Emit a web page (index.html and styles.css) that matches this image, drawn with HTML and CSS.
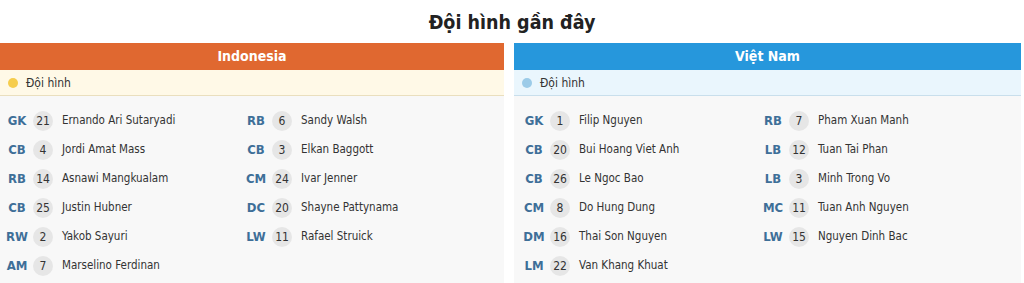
FILE: index.html
```html
<!DOCTYPE html>
<html lang="vi">
<head>
<meta charset="utf-8">
<link rel="stylesheet" href="styles.css">
</head>
<body>
<h1 class="title">Đội hình gần đây</h1>
<div class="teams">
  <section class="team team-home">
    <div class="team-head">Indonesia</div>
    <div class="team-sub"><span class="dot"></span>Đội hình</div>
    <div class="lineup">
      <div class="col">
        <div class="row"><span class="pos">GK</span><span class="num">21</span><span class="name">Ernando Ari Sutaryadi</span></div>
        <div class="row"><span class="pos">CB</span><span class="num">4</span><span class="name">Jordi Amat Mass</span></div>
        <div class="row"><span class="pos">RB</span><span class="num">14</span><span class="name">Asnawi Mangkualam</span></div>
        <div class="row"><span class="pos">CB</span><span class="num">25</span><span class="name">Justin Hubner</span></div>
        <div class="row"><span class="pos">RW</span><span class="num">2</span><span class="name">Yakob Sayuri</span></div>
        <div class="row"><span class="pos">AM</span><span class="num">7</span><span class="name">Marselino Ferdinan</span></div>
      </div>
      <div class="col">
        <div class="row"><span class="pos">RB</span><span class="num">6</span><span class="name">Sandy Walsh</span></div>
        <div class="row"><span class="pos">CB</span><span class="num">3</span><span class="name">Elkan Baggott</span></div>
        <div class="row"><span class="pos">CM</span><span class="num">24</span><span class="name">Ivar Jenner</span></div>
        <div class="row"><span class="pos">DC</span><span class="num">20</span><span class="name">Shayne Pattynama</span></div>
        <div class="row"><span class="pos">LW</span><span class="num">11</span><span class="name">Rafael Struick</span></div>
      </div>
    </div>
  </section>
  <section class="team team-away">
    <div class="team-head">Việt Nam</div>
    <div class="team-sub"><span class="dot"></span>Đội hình</div>
    <div class="lineup">
      <div class="col">
        <div class="row"><span class="pos">GK</span><span class="num">1</span><span class="name">Filip Nguyen</span></div>
        <div class="row"><span class="pos">CB</span><span class="num">20</span><span class="name">Bui Hoang Viet Anh</span></div>
        <div class="row"><span class="pos">CB</span><span class="num">26</span><span class="name">Le Ngoc Bao</span></div>
        <div class="row"><span class="pos">CM</span><span class="num">8</span><span class="name">Do Hung Dung</span></div>
        <div class="row"><span class="pos">DM</span><span class="num">16</span><span class="name">Thai Son Nguyen</span></div>
        <div class="row"><span class="pos">LM</span><span class="num">22</span><span class="name">Van Khang Khuat</span></div>
      </div>
      <div class="col">
        <div class="row"><span class="pos">RB</span><span class="num">7</span><span class="name">Pham Xuan Manh</span></div>
        <div class="row"><span class="pos">LB</span><span class="num">12</span><span class="name">Tuan Tai Phan</span></div>
        <div class="row"><span class="pos">LB</span><span class="num">3</span><span class="name">Minh Trong Vo</span></div>
        <div class="row"><span class="pos">MC</span><span class="num">11</span><span class="name">Tuan Anh Nguyen</span></div>
        <div class="row"><span class="pos">LW</span><span class="num">15</span><span class="name">Nguyen Dinh Bac</span></div>
      </div>
    </div>
  </section>
</div>
</body>
</html>
```

FILE: styles.css
```css
* { box-sizing: border-box; }
html, body { margin: 0; padding: 0; background: #fff; }
body {
  font-family: "DejaVu Sans Condensed", "DejaVu Sans", sans-serif;
  font-size: 12px;
  color: #333;
  overflow: hidden;
}
.title {
  margin: 0;
  height: 43px;
  padding-top: 10px;
  text-align: center;
  font-size: 19.5px;
  line-height: 26px;
  font-weight: bold;
  color: #222;
}
.teams {
  display: grid;
  grid-template-columns: 504px 507px;
  column-gap: 10px;
  padding-right: 3px;
}
.team-head {
  height: 27px;
  line-height: 27px;
  text-align: center;
  font-weight: bold;
  font-size: 14px;
  color: #fff;
}
.team-home .team-head { background: #e06830; }
.team-away .team-head { background: #2697dc; }
.team-sub {
  height: 26px;
  display: flex;
  align-items: center;
  padding-left: 8px;
  font-size: 12px;
  color: #333;
}
.team-home .team-sub { background: #fff9e7; border-bottom: 1px solid #eadfbe; }
.team-away .team-sub { background: #eaf6fd; border-bottom: 1px solid #c9dfec; }
.dot {
  width: 10px;
  height: 10px;
  border-radius: 50%;
  margin-right: 8px;
}
.team-home .dot { background: #f6cd4d; }
.team-away .dot { background: #9ccbe8; }
.lineup {
  background: #f8f8f8;
  display: grid;
  grid-template-columns: 239px 1fr;
  padding-top: 10px;
  height: 200px;
}
.team-away .lineup { padding-left: 3px; }
.row {
  height: 29px;
  display: flex;
  align-items: center;
}
.pos {
  width: 34px;
  text-align: center;
  font-weight: bold;
  font-size: 13px;
  color: #3e6f98;
}
.num {
  width: 20px;
  height: 20px;
  margin-left: -1px;
  border-radius: 50%;
  background: #e6e6e6;
  display: flex;
  align-items: center;
  justify-content: center;
  font-size: 12px;
  color: #333;
}
.name {
  margin-left: 9px;
  font-size: 11.5px;
  color: #333;
  position: relative;
  top: -1px;
}
```
